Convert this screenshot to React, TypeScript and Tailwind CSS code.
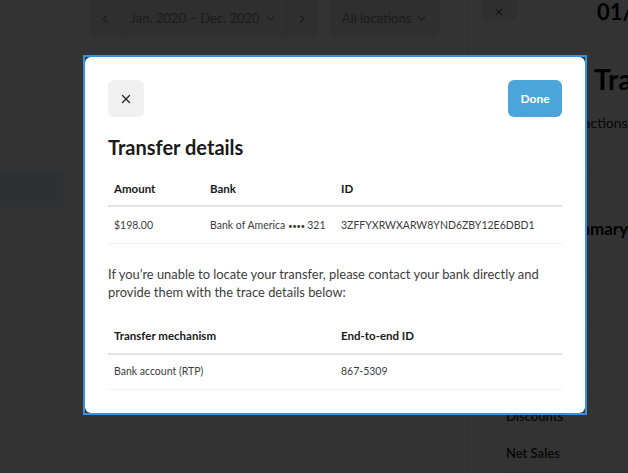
import React from 'react';
import { X, ChevronLeft, ChevronRight, ChevronDown } from 'lucide-react';

const transfer = {
  amount: '$198.00',
  bankName: 'Bank of America',
  bankLast4: '321',
  id: '3ZFFYXRWXARW8YND6ZBY12E6DBD1',
  mechanism: 'Bank account (RTP)',
  endToEnd: '867-5309',
};

const Background: React.FC = () => (
  <div className="flex h-full">
    <div className="w-[468px] shrink-0">
      <div className="flex h-[37px] pl-[89px]">
        <div className="flex rounded-b-md bg-[#ececec]">
          <button className="flex w-[33px] items-center justify-center border-r border-[#dcdcdc] text-[#888]">
            <ChevronLeft size={14} />
          </button>
          <button className="flex w-[164px] items-center justify-center gap-1 border-r border-[#dcdcdc] text-[13px] text-[#888]">
            Jan. 2020 – Dec. 2020 <ChevronDown size={13} />
          </button>
          <button className="flex w-[32px] items-center justify-center text-[#888]">
            <ChevronRight size={14} />
          </button>
        </div>
        <button className="ml-[12px] flex w-[110px] items-center justify-center gap-1 rounded-b-md bg-[#ececec] text-[13px] text-[#888]">
          All locations <ChevronDown size={13} />
        </button>
      </div>
      <div className="mt-[133px] h-[37px] w-[63px] bg-[#e2f5ff]" />
    </div>

    <div className="flex-1 border-l border-[#e6e6e6] bg-white">
      <div className="flex h-[38px] border-b border-[#ececec]">
        <button className="ml-[12px] flex h-[20px] w-[36px] items-end justify-center rounded-b-md bg-[#ececec] pb-0.5 text-[#333]">
          <X size={12} />
        </button>
        <span className="ml-[80px] -mt-[5px] whitespace-nowrap text-[22px] font-bold text-black">01/01</span>
      </div>
      <div className="pl-[12px]">
        <div className="mt-[24px] whitespace-nowrap pl-[113px] text-[28px] leading-[34px] font-bold text-black">Tra</div>
        <div className="mt-[7px] h-[37px] whitespace-nowrap pl-[70px] pt-[9px] text-[14px] text-[#222]">Transactions</div>
        <div className="mt-[35px] border-t border-[#ececec] pt-[40px] pl-[76px] text-[17px] font-bold whitespace-nowrap text-black">Summary</div>
        <div className="mt-[36px] border-t border-[#ececec]" />
        <div className="pl-[18px]">
          <div className="h-[48px] border-b border-[#ececec]" />
          <div className="h-[40px] border-b border-[#ececec]" />
          <div className="h-[32px] border-b border-[#ececec]" />
          <div className="flex h-[37px] items-center border-b border-[#ececec] pl-[7px] text-[13px] font-semibold text-[#222]">Discounts</div>
          <div className="flex h-[37px] items-center border-b border-[#ececec] pl-[7px] text-[13px] font-semibold text-[#222]">Net Sales</div>
        </div>
      </div>
    </div>
  </div>
);

const App: React.FC = () => {
  return (
    <div className="relative h-[473px] w-full overflow-hidden bg-white font-['Lato','Noto_Sans',sans-serif]">
      <Background />

      <div className="absolute inset-0 bg-black/80" />

      <div className="absolute left-[83px] top-[55px] w-[504px] border-2 border-[#3592e2] bg-[#333]">
        <div className="rounded-md bg-white px-[23px] pt-[23px] pb-[23px]">
          <div className="flex items-center justify-between">
            <button className="flex h-[37px] w-[36px] items-center justify-center rounded-md bg-[#f0f0f0] text-[#222]">
              <X size={14} strokeWidth={2.2} />
            </button>
            <button className="h-[37px] w-[54px] rounded-md bg-[#4ca5d9] text-[12px] font-bold text-white">
              Done
            </button>
          </div>

          <h2 className="mt-[16px] text-[20px] leading-[28px] font-bold text-[#1a1a1a]">Transfer details</h2>

          <table className="mt-[11px] w-full table-fixed border-collapse text-left">
            <thead>
              <tr className="h-[34px] border-b-2 border-[#e2e2e2] text-[11.5px] text-[#1a1a1a]">
                <th className="w-[96px] px-[6px] font-bold">Amount</th>
                <th className="w-[131px] px-[6px] font-bold">Bank</th>
                <th className="px-[6px] font-bold">ID</th>
              </tr>
            </thead>
            <tbody>
              <tr className="h-[37px] border-b border-[#f0f0f0] text-[10.5px] text-[#3d3d3d]">
                <td className="px-[6px] pt-[2px]">{transfer.amount}</td>
                <td className="px-[6px] pt-[2px] whitespace-nowrap">
                  {transfer.bankName} <span className="text-[8px] tracking-[-0.5px]">••••</span> {transfer.bankLast4}
                </td>
                <td className="px-[6px] pt-[2px]">{transfer.id}</td>
              </tr>
            </tbody>
          </table>

          <p className="mt-[21px] text-[12.9px] leading-[18px] text-[#3d3d3d]">
            If you’re unable to locate your transfer, please contact your bank directly and provide them with the trace details below:
          </p>

          <table className="mt-[19px] w-full table-fixed border-collapse text-left">
            <thead>
              <tr className="h-[34px] border-b-2 border-[#e2e2e2] text-[11.5px] text-[#1a1a1a]">
                <th className="w-1/2 px-[6px] font-bold">Transfer mechanism</th>
                <th className="w-1/2 px-[6px] font-bold">End-to-end ID</th>
              </tr>
            </thead>
            <tbody>
              <tr className="h-[36px] border-b border-[#f0f0f0] text-[10.5px] text-[#3d3d3d]">
                <td className="px-[6px]">{transfer.mechanism}</td>
                <td className="px-[6px]">{transfer.endToEnd}</td>
              </tr>
            </tbody>
          </table>
        </div>
      </div>
    </div>
  );
};

export default App;
